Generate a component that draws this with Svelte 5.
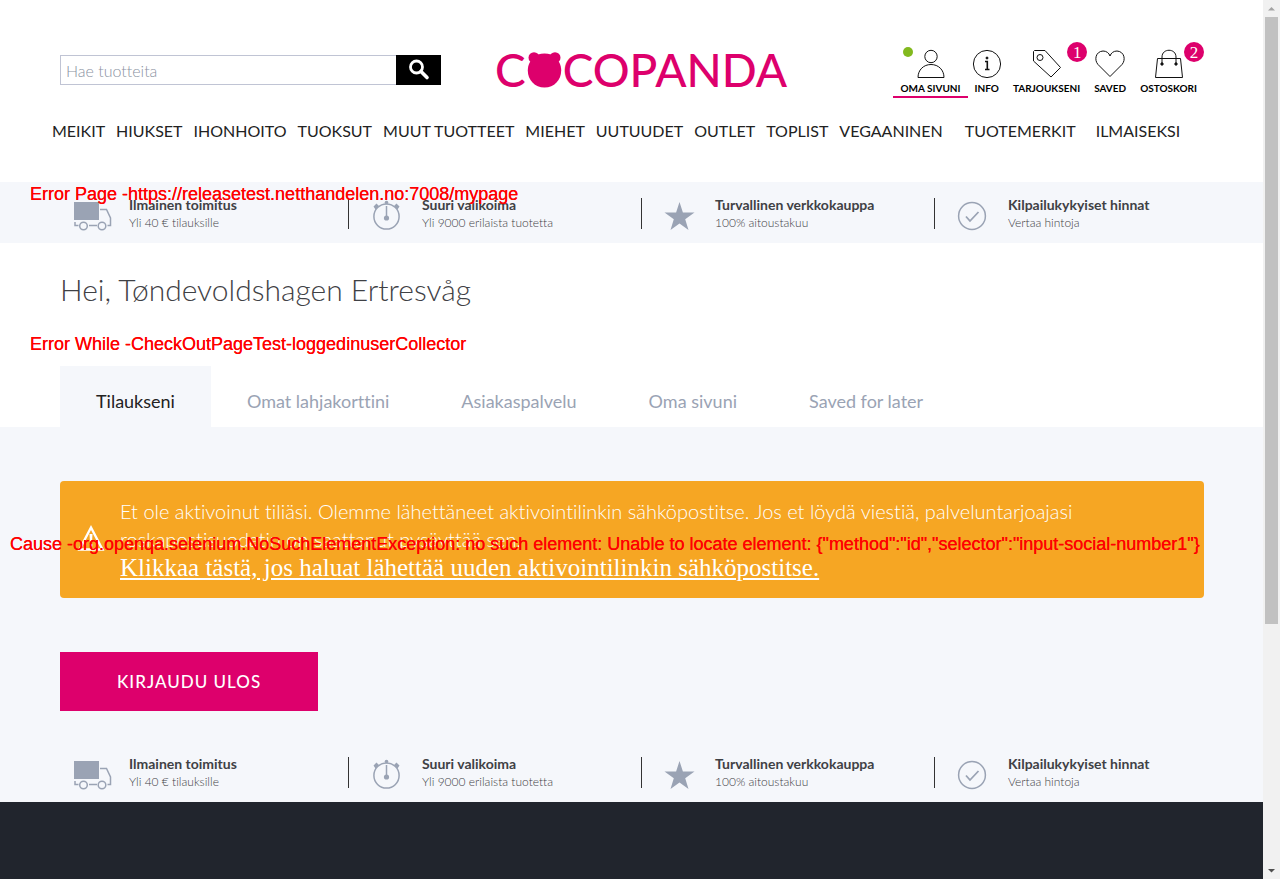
<script>
  const menu = ['Meikit', 'Hiukset', 'Ihonhoito', 'Tuoksut', 'Muut tuotteet', 'Miehet', 'Uutuudet', 'Outlet', 'Toplist', 'Vegaaninen'];
  const extraMenu = ['Tuotemerkit', 'Ilmaiseksi'];
  const tabs = ['Tilaukseni', 'Omat lahjakorttini', 'Asiakaspalvelu', 'Oma sivuni', 'Saved for later'];
  const benefits = [
    { icon: 'truck', title: 'Ilmainen toimitus', text: 'Yli 40 € tilauksille' },
    { icon: 'watch', title: 'Suuri valikoima', text: 'Yli 9000 erilaista tuotetta' },
    { icon: 'star', title: 'Turvallinen verkkokauppa', text: '100% aitoustakuu' },
    { icon: 'check', title: 'Kilpailukykyiset hinnat', text: 'Vertaa hintoja' }
  ];
</script>

{#snippet benefitBar()}
  <ul class="benefits">
    {#each benefits as b}
      <li>
        <svg width="38" height="32" viewBox="0 0 38 32" fill="none" stroke="#9aa3b4" stroke-width="1.5" aria-hidden="true">
          {#if b.icon === 'truck'}
            <path d="M0 2h25v18H0z" fill="#9aa3b4" stroke="none" />
            <path d="M26 9.500h6.500l4 8.500v7.500h-3M1 22v3.500h3.500M15 25.500h8" />
            <circle cx="9.500" cy="26" r="3.800" /><circle cx="28" cy="26" r="3.800" />
          {:else if b.icon === 'watch'}
            <circle cx="19.500" cy="16.500" r="12.600" />
            <path d="M19.500 6v13" />
            <g fill="#9aa3b4" stroke="none">
              <circle cx="19.500" cy="18" r="2.600" /><circle cx="19.500" cy="2.500" r="1.800" />
              <path d="M6.500 6.500l3-3 2.500 2.500-3.500 3.500zM32.500 6.500l-3-3-2.500 2.500 3.500 3.500z" />
            </g>
          {:else if b.icon === 'star'}
            <path d="M19.500 2l3.400 10.500H34.500l-9.300 6.700L28.500 30l-9-6.500L10.500 30l3.300-10.800L4.500 12.500h11.600z" fill="#9aa3b4" stroke="none" />
          {:else}
            <circle cx="19" cy="16" r="13.400" />
            <path d="M13 16.500l4 4.500 8.500-9" stroke-width="1.800" />
          {/if}
        </svg>
        <div>
          <strong>{b.title}</strong>
          <span>{b.text}</span>
        </div>
      </li>
    {/each}
  </ul>
{/snippet}

<div class="window">
  <div class="page">
    <header>
      <div class="top">
        <form class="search">
          <input type="search" placeholder="Hae tuotteita" aria-label="Hae tuotteita" />
          <button type="button" aria-label="Hae">
            <svg width="22" height="22" viewBox="0 0 22 22" fill="none" stroke="#fff" aria-hidden="true">
              <circle cx="8.500" cy="8" r="6" stroke-width="2.800" />
              <path d="M13 12.500l6 6" stroke-width="3.600" stroke-linecap="round" />
            </svg>
          </button>
        </form>
        <a class="logo" href="#home" aria-label="Cocopanda">
          <span>C</span>
          <svg width="35" height="36" viewBox="0 0 35 36" fill="#dd006c" aria-hidden="true">
            <circle cx="7" cy="5.700" r="5.500" /><circle cx="28" cy="5.700" r="5.500" />
            <path d="M11 2.500c4-1.200 9-1.200 13 0L32 10c1.500 2.500 2.200 5.500 2.200 8.500 0 9.500-7 17-16.700 17S.8 28 .8 18.500c0-3 .7-6 2.200-8.500z" />
          </svg>
          <span>COPANDA</span>
        </a>
        <nav class="tools" aria-label="Oma tili">
          <a class="active" href="#me">
            <svg width="30" height="30" viewBox="0 0 30 30" aria-hidden="true">
              <circle cx="15" cy="7.500" r="6.200" /><path d="M2 28.500c0-7.500 5.500-13 13-13s13 5.500 13 13z" />
            </svg>
            Oma sivuni
            <i class="dot"></i>
          </a>
          <a href="#info">
            <svg width="30" height="30" viewBox="0 0 30 30" aria-hidden="true">
              <circle cx="15" cy="15" r="13.600" />
              <path d="M13 12.500h2.300v8M13 20.500h4.500" stroke-width="1.600" /><circle cx="15" cy="9" r="1" fill="#111" />
            </svg>
            Info
          </a>
          <a href="#offers">
            <svg width="30" height="30" viewBox="0 0 30 30" aria-hidden="true">
              <path d="M2.500 1.500h10.500L28.500 18.500 19 28 1.500 12v-9.500z" stroke-linejoin="round" /><circle cx="8" cy="8.500" r="3" />
            </svg>
            Tarjoukseni
            <b class="badge">1</b>
          </a>
          <a href="#saved">
            <svg width="30" height="30" viewBox="0 0 30 30" aria-hidden="true">
              <path d="M15 27.500L3 15.500C-1 11 .5 2.500 8 2c3.500 0 6 2 7 5 1-3 3.500-5 7-5 7.500.5 9 9 5 13.500z" />
            </svg>
            Saved
          </a>
          <a href="#cart">
            <svg width="30" height="30" viewBox="0 0 30 30" aria-hidden="true">
              <path d="M3.500 9.500h23l2 19h-27zM8 15V8c0-9 14-9 14 0v7" />
              <circle cx="8" cy="15" r="1.200" fill="#111" /><circle cx="22" cy="15" r="1.200" fill="#111" />
            </svg>
            Ostoskori
            <b class="badge">2</b>
          </a>
        </nav>
      </div>
      <nav class="menu" aria-label="Tuotteet">
        {#each menu as item}<a href="#shop">{item}</a>{/each}
        <div class="extra">
          {#each extraMenu as item}<a href="#shop">{item}</a>{/each}
        </div>
      </nav>
    </header>

    {@render benefitBar()}

    <h1>Hei, Tøndevoldshagen Ertresvåg</h1>

    <nav class="tabs" aria-label="Oma sivuni">
      {#each tabs as tab, i}<a href="#tab" class:current={i === 0}>{tab}</a>{/each}
    </nav>

    <main>
      <section class="alert">
        <svg width="28" height="28" viewBox="0 0 28 28" aria-hidden="true">
          <path d="M14 3.500L25.500 25.500H2.500z" fill="none" stroke="#fff" stroke-width="2.400" />
          <path d="M12.500 10h3l-.5 8.500h-2zM12.700 20h2.600v2.500h-2.600z" fill="#fff" />
        </svg>
        <div>
          <p>Et ole aktivoinut tiliäsi. Olemme lähettäneet aktivointilinkin sähköpostitse. Jos et löydä viestiä, palveluntarjoajasi roskapostisuodatin on saattanut pysäyttää sen.</p>
          <a href="#activate">Klikkaa tästä, jos haluat lähettää uuden aktivointilinkin sähköpostitse.</a>
        </div>
      </section>
      <button class="logout" type="button">Kirjaudu ulos</button>
    </main>

    {@render benefitBar()}
    <footer></footer>
  </div>

  <div class="scrollbar" aria-hidden="true">
    <svg width="17" height="17" viewBox="0 0 17 17"><path d="M5 10.500L8.500 7 12 10.500z" fill="#a3a3a3" /></svg>
    <div class="thumb"></div>
    <svg width="17" height="17" viewBox="0 0 17 17"><path d="M5 7l3.500 3.500L12 7z" fill="#505050" /></svg>
  </div>

  <p class="note page-note">Error Page -https://releasetest.netthandelen.no:7008/mypage</p>
  <p class="note test-note">Error While -CheckOutPageTest-loggedinuserCollector</p>
  <p class="note cause-note">Cause -org.openqa.selenium.NoSuchElementException: no such element: Unable to locate element: {'{"method":"id","selector":"input-social-number1"}'}</p>
</div>

<style>
  :global(body) { margin: 0; font-family: Lato, sans-serif; font-variant-ligatures: none; color: #3f4145; }
  * { box-sizing: border-box; }
  a { color: inherit; text-decoration: none; }
  p, h1, ul { margin: 0; padding: 0; }
  svg { display: block; flex: none; }

  .window { position: relative; display: grid; grid-template-columns: 1fr 17px; min-height: 100vh; }
  .page { display: flex; flex-direction: column; min-width: 0; }

  header { padding: 42px 59px 41px 60px; }
  .top { display: flex; align-items: flex-start; }
  .search { display: flex; width: 381px; height: 30px; margin-top: 13px; }
  .search input { flex: 1; min-width: 0; padding: 0 5px; border: 1px solid #c0c4d4; border-right: 0; border-radius: 0; font: 300 16px Lato, sans-serif; font-variant-ligatures: none; }
  .search input::placeholder { color: #8a92a2; opacity: 1; }
  .search button { display: grid; place-items: center; width: 45px; padding: 0; border: 0; background: #000; }
  .logo { display: flex; align-items: flex-start; margin: 10px 0 0 54px; color: #dd006c; font-size: 46px; font-weight: 500; line-height: 36px; }
  .logo svg { margin: 0 1px; }
  .tools { display: flex; margin-left: auto; }
  .tools a { position: relative; display: flex; flex-direction: column; align-items: center; padding: 7px 7px 0; color: #000; font-size: 10px; font-weight: 700; line-height: 16px; text-transform: uppercase; }
  .tools svg { fill: none; stroke: #111; stroke-width: 1; margin: 0 -3px 1px; }
  .tools .active { border-bottom: 2px solid #dd006c; }
  .dot { position: absolute; left: 10px; top: 5px; width: 10px; height: 10px; border-radius: 50%; background: #82b91e; }
  .badge { position: absolute; right: 0; top: 0; width: 20px; height: 20px; border-radius: 50%; background: #dd006c; color: #fff; font: 17px/22px "Liberation Serif", serif; text-align: center; }
  .menu { display: flex; gap: 11px; margin: 23px 0 0 -8px; color: #222; font-size: 16px; line-height: 20px; text-transform: uppercase; white-space: nowrap; }
  .extra { display: flex; gap: 20px; margin-left: 11px; }

  .benefits { display: grid; grid-template-columns: repeat(4, 1fr); padding: 16px 35px 14px 56px; background: #f5f7fb; list-style: none; }
  .benefits li { display: flex; gap: 17px; height: 31px; padding-left: 18px; }
  .benefits li:not(:last-child) { border-right: 1px solid #333; }
  .benefits svg { margin-top: 2px; }
  .benefits strong, .benefits span { display: block; font-size: 14px; line-height: 18px; margin-top: -2px; white-space: nowrap; }
  .benefits span { margin-top: 0; font-size: 12px; font-weight: 300; }

  h1 { padding: 27px 60px 0; font-size: 30px; font-weight: 300; line-height: 38px; }
  .tabs { display: flex; margin: 58px 60px 0; font-size: 18px; line-height: 22px; color: #9aa3b4; }
  .tabs a { padding: 24px 36px 15px; }
  .tabs .current { background: #f5f7fb; color: #222; }

  main { padding: 54px 59px 30px 60px; background: #f5f7fb; }
  .alert { display: flex; align-items: center; gap: 15px; padding: 16px 80px 16px 17px; border-radius: 4px; background: #f6a623; color: #fff; font-size: 20px; font-weight: 300; line-height: 28px; }
  .alert a { display: block; font: 25px/29px "Liberation Serif", serif; text-decoration: underline; }
  .alert svg { margin-bottom: 4px; }
  .logout { display: block; margin-top: 54px; padding: 0 57px; height: 59px; border: 0; background: #dd006c; color: #fff; font: 500 17px Lato, sans-serif; letter-spacing: 1px; text-transform: uppercase; }
  footer { flex: 1; background: #21252d; }

  .scrollbar { display: flex; flex-direction: column; height: 100vh; background: #f1f1f1; }
  .thumb { height: 69%; margin: 0 2px auto; background: #c1c1c1; }

  .note { position: absolute; color: #f00; font: 18px/20px "Liberation Sans", sans-serif; text-shadow: 0 0 0 #f00; white-space: nowrap; }
  .page-note { left: 30px; top: 184px; }
  .test-note { left: 30px; top: 334px; }
  .cause-note { left: 10px; top: 534px; }
</style>
